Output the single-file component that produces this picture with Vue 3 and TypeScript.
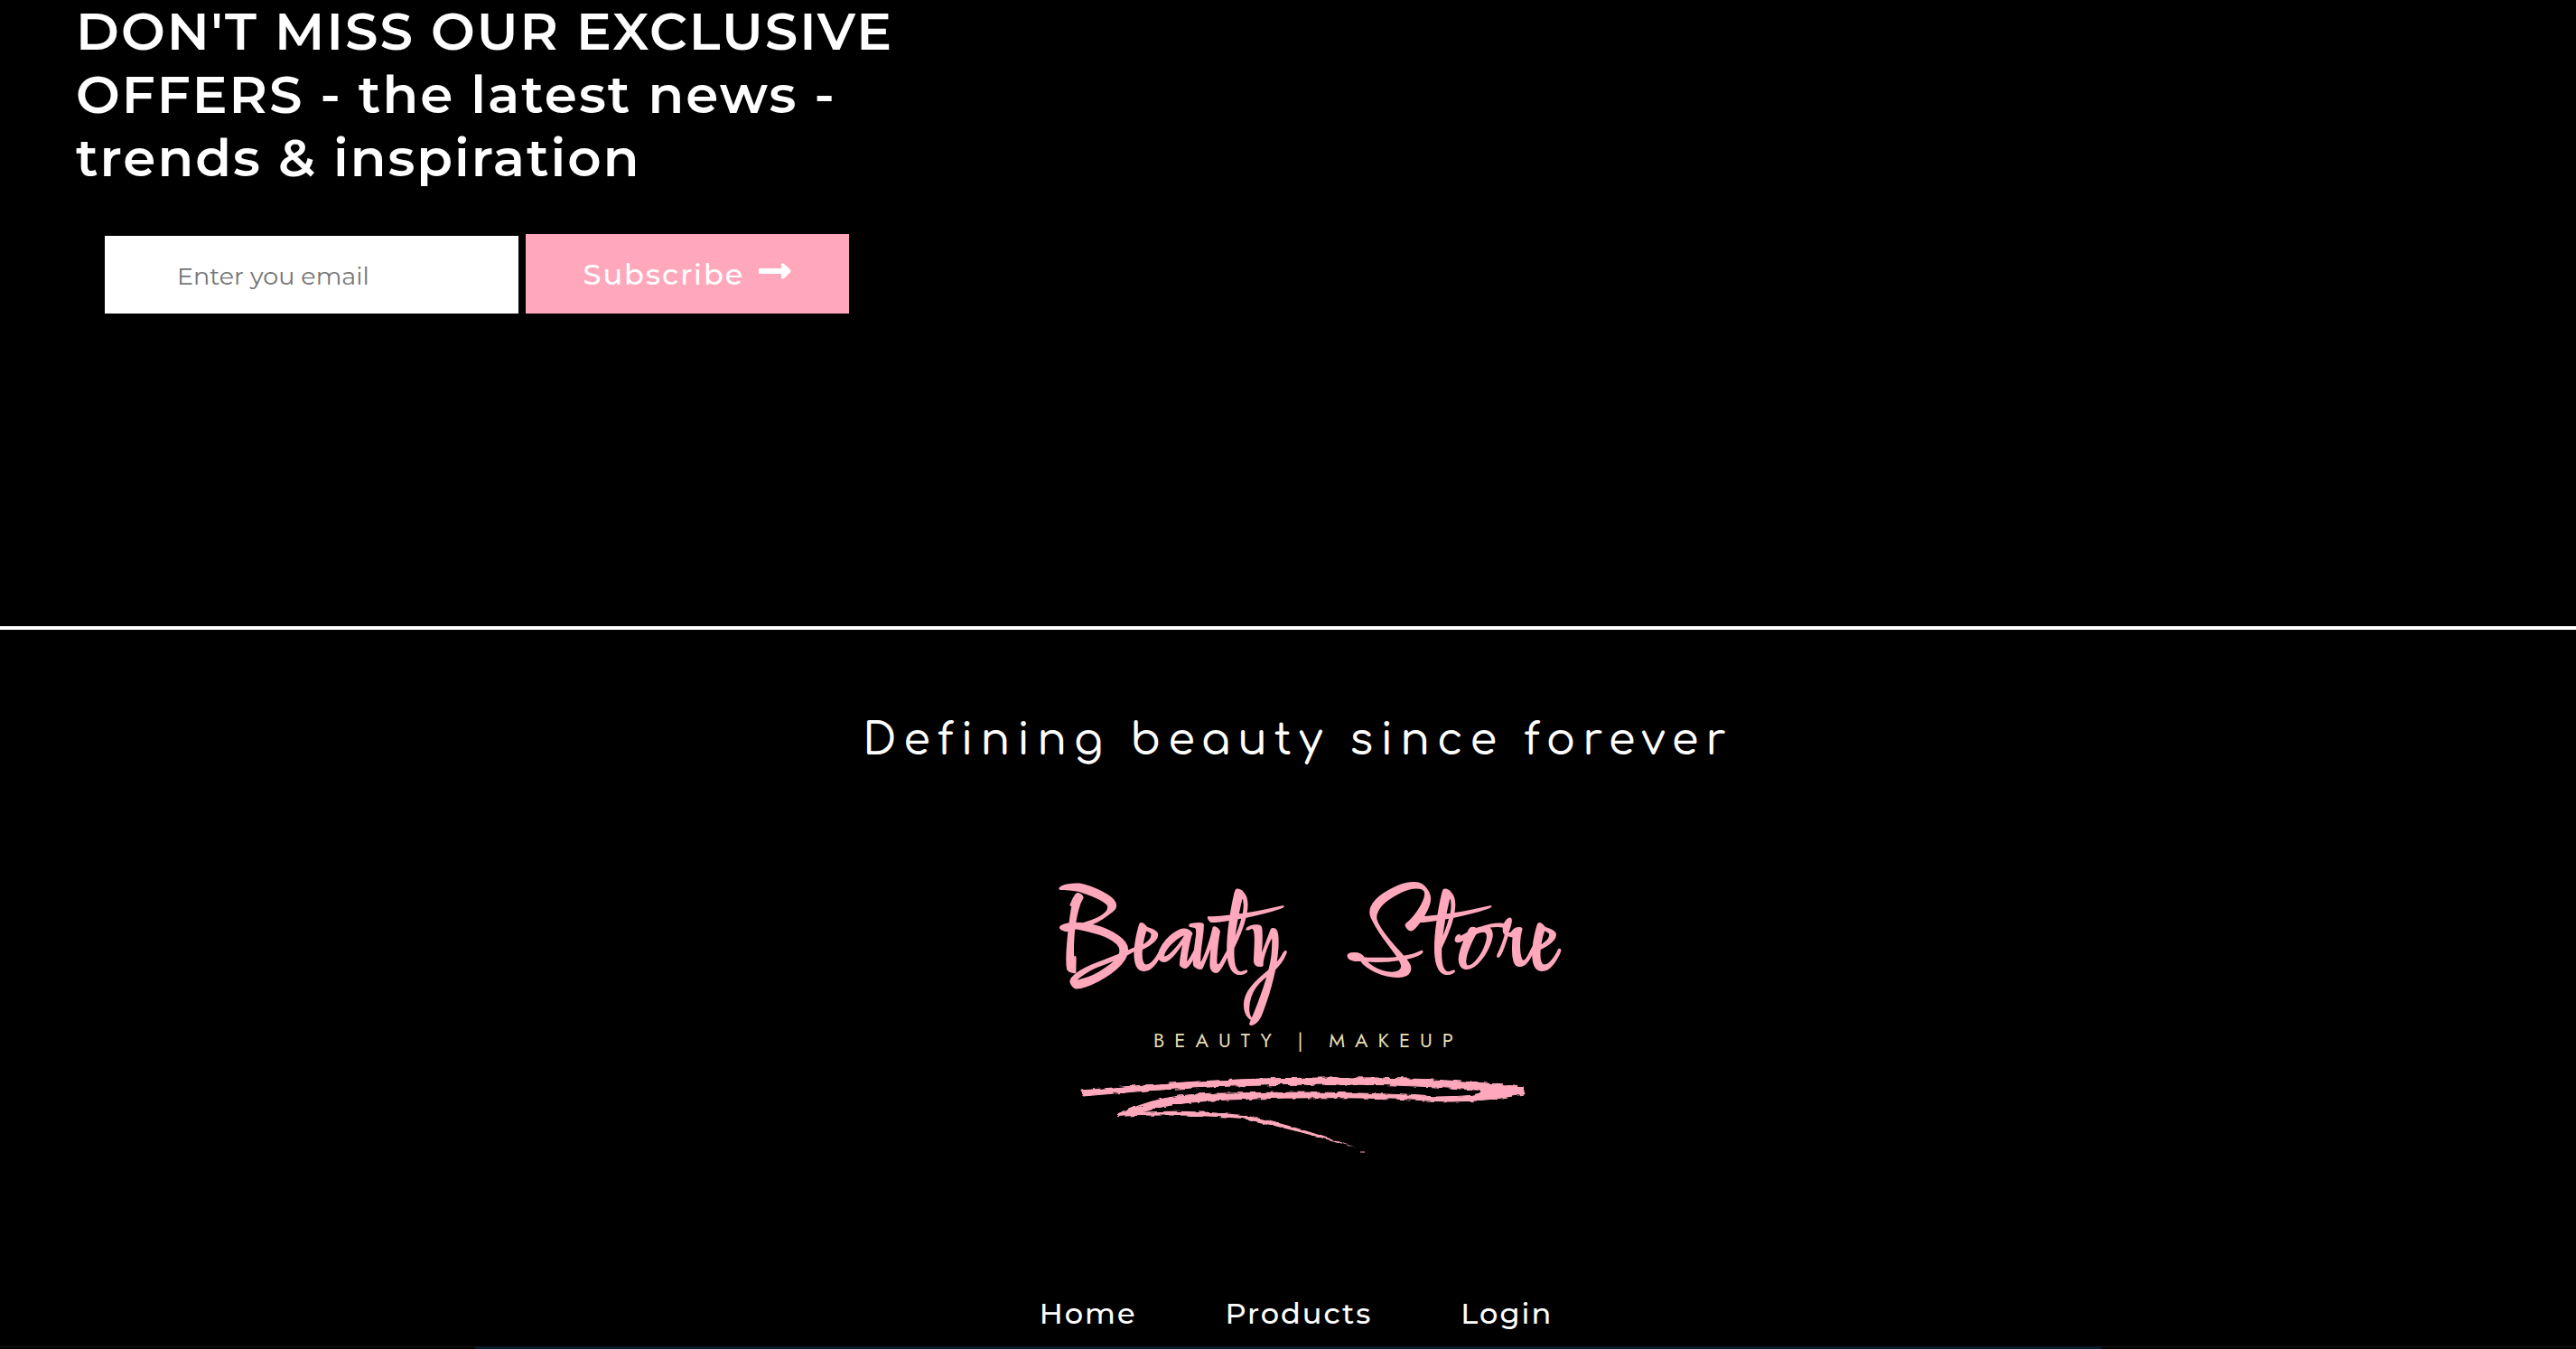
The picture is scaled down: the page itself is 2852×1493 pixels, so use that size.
<script setup lang="ts">
import { ref } from 'vue'

interface NavLink {
  label: string
  href: string
}

const email = ref<string>('')

const links: NavLink[] = [
  { label: 'Home', href: '#home' },
  { label: 'Products', href: '#products' },
  { label: 'Login', href: '#login' },
]
</script>

<template>
  <div class="page">
    <section class="newsletter">
      <h2 class="headline">DON'T MISS OUR EXCLUSIVE OFFERS - the latest news - trends &amp; inspiration</h2>
      <form class="signup" @submit.prevent>
        <input v-model="email" class="email" type="email" placeholder="Enter you email" aria-label="Email address" />
        <button class="subscribe" type="submit">
          <span>Subscribe</span>
          <svg class="arrow" viewBox="0 0 36 18" aria-hidden="true">
            <path d="M1 6H25V2Q25 -1 28 1L35 7.500Q36 9 35 10.500L28 17Q25 19 25 16V12H1Q0 12 0 11V7Q0 6 1 6Z" fill="#fff" />
          </svg>
        </button>
      </form>
    </section>

    <footer class="footer">
      <p class="tagline">Defining beauty since forever</p>

      <svg class="logo" viewBox="0 0 560 320" role="img" aria-label="Beauty Store, Beauty and Makeup">
        <defs>
          <filter id="brush" x="-5%" y="-10%" width="110%" height="120%">
            <feTurbulence type="fractalNoise" baseFrequency="0.09 0.25" numOctaves="2" seed="4" result="grain" />
            <feDisplacementMap in="SourceGraphic" in2="grain" scale="5" />
          </filter>
        </defs>
        <text class="wordmark" x="12" y="106">Beauty</text>
        <text class="wordmark" x="332" y="106">Store</text>
        <text class="submark" x="117" y="189">BEAUTY | MAKEUP</text>
        <g fill="#ffa8bc" stroke="#ffa8bc" filter="url(#brush)">
          <path d="M38 237Q180 223 300 223Q420 221 527 233L528 241Q420 230 330 230Q180 229 39 243Z" />
          <path d="M430 226Q490 228 527 234V240Q490 247 450 248L478 240Q484 236 470 234Z" />
          <path d="M77 265Q120 239 200 240Q330 237 430 244Q480 244 527 234L527 241Q470 252 420 248Q330 242 200 247Q130 250 100 263Z" />
          <path d="M77 263Q140 256 216 264Q270 274 341 300Q280 282 216 268Q150 262 77 266Z" stroke="none" />
          <path d="M346 304h5v2h-5z" opacity="0.500" stroke="none" />
        </g>
      </svg>

      <nav class="nav" aria-label="Footer">
        <a v-for="link in links" :key="link.label" :href="link.href">{{ link.label }}</a>
      </nav>

      <div class="edge"><div class="edge-bar"></div></div>
    </footer>
  </div>
</template>

<style>
body {
  margin: 0;
  background: #000;
}
</style>

<style scoped>
.page {
  background: #000;
  color: #fff;
  font-family: Montserrat, Inter, "Open Sans", sans-serif;
}

.newsletter {
  box-sizing: border-box;
  min-height: 693px;
  padding: 0 84px;
}

.headline {
  max-width: 960px;
  margin: 0;
  font-size: 58px;
  font-weight: 600;
  line-height: 70px;
  letter-spacing: 2px;
}

.signup {
  display: flex;
  align-items: flex-end;
  gap: 8px;
  margin: 49px 0 0 32px;
}

.email {
  box-sizing: border-box;
  width: 458px;
  height: 86px;
  padding: 2px 80px 0;
  border: 0;
  border-radius: 0;
  background: #fff;
  color: #222;
  font-family: inherit;
  font-size: 27px;
}

.email::placeholder {
  color: #757575;
  opacity: 1;
}

.subscribe {
  display: flex;
  align-items: center;
  justify-content: center;
  gap: 16px;
  box-sizing: border-box;
  width: 358px;
  height: 88px;
  padding: 0;
  border: 0;
  background: #ffa8bc;
  color: #fff;
  font-family: inherit;
  font-size: 32px;
  font-weight: 500;
  letter-spacing: 2px;
}

.arrow {
  width: 36px;
  height: 18px;
  margin-bottom: 6px;
}

.footer {
  display: flex;
  flex-direction: column;
  align-items: center;
  border-top: 4px solid #fff;
}

.tagline {
  margin: 93px 0 0;
  padding-left: 22px;
  font-family: Comfortaa, Inter, sans-serif;
  font-size: 48px;
  font-weight: 500;
  line-height: 60px;
  letter-spacing: 8px;
}

.logo {
  width: 560px;
  height: 320px;
  margin: 120px 0 0 28px;
  overflow: visible;
}

.wordmark {
  fill: #ffa8bc;
  stroke: #ffa8bc;
  stroke-width: 2px;
  font-family: Comforter, Caveat, "Brush Script MT", cursive;
  font-size: 124px;
}

.submark {
  fill: #e6deb4;
  font-family: Jost, Lato, sans-serif;
  font-size: 22px;
  letter-spacing: 11px;
}

.nav {
  display: flex;
  gap: 98px;
  margin-top: 144px;
  padding-left: 18px;
  font-size: 32px;
  font-weight: 500;
  line-height: 40px;
  letter-spacing: 2px;
}

.nav a {
  color: #fff;
  text-decoration: none;
}

.edge {
  align-self: stretch;
  margin-top: 16px;
  border-top: 1px solid #161616;
}

.edge-bar {
  width: 1800px;
  max-width: 100%;
  height: 2px;
  margin: 0 auto;
  background: #001c30;
}
</style>
